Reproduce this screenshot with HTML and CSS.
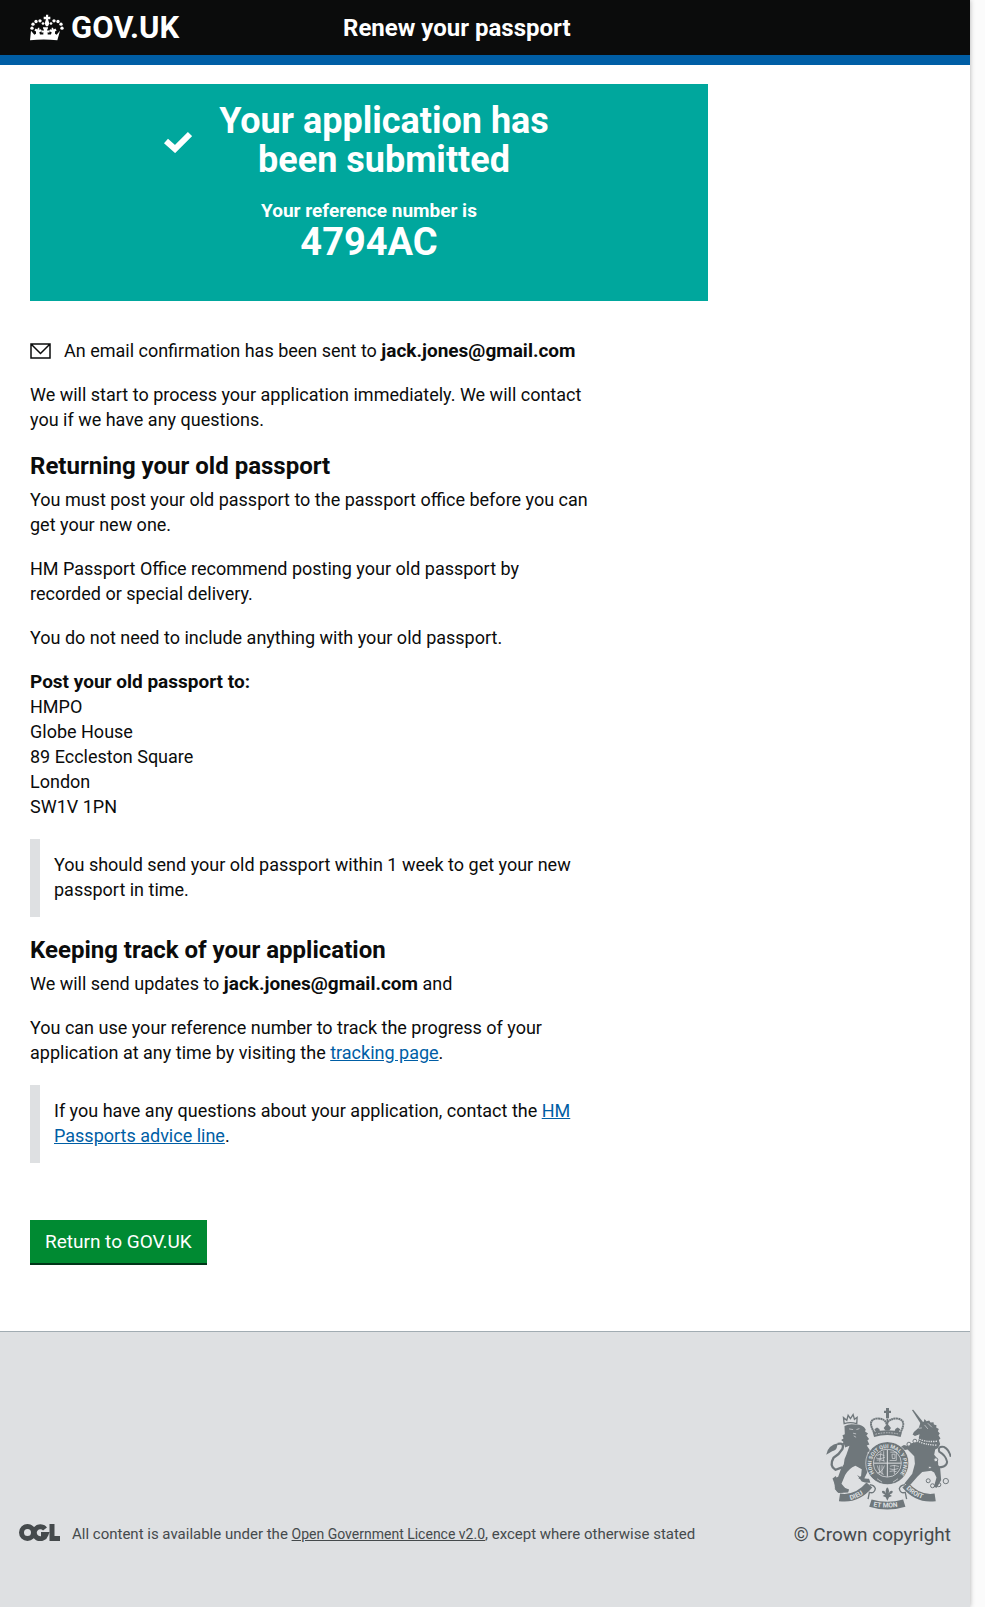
FILE: index.html
```
<!DOCTYPE html>
<html lang="en">
<head>
<meta charset="utf-8">
<title>Renew your passport</title>
<link rel="stylesheet" href="styles.css">
</head>
<body>
<div class="page">
  <header class="header">
    <a class="brand" href="#">
      <svg class="crown" viewBox="91 40 102 80" aria-hidden="true">
        <g fill="#fff">
          <circle cx="97" cy="82" r="5"/><circle cx="100" cy="70" r="5"/><circle cx="109" cy="62" r="5"/><circle cx="121" cy="60" r="5"/><circle cx="130" cy="68" r="4"/>
          <circle cx="187" cy="82" r="5"/><circle cx="184" cy="70" r="5"/><circle cx="175" cy="62" r="5"/><circle cx="163" cy="60" r="5"/><circle cx="154" cy="68" r="4"/>
          <path d="M139 42h7l-1 6h7v7h-7l4 13-4 8h-6l-4-8 4-13h-7v-7h7z"/>
          <path d="M94 90l10 12 5-3v-7l-5-3 4-6 5 3 2-5 4 0 0 6 5-2 2 6-7 3 2 7 10 0v-7l-5 2v-8l6 2v-6h-2v-5h15v5h-2v6l6-2v8l-5-2v7l10 0 2-7-7-3 2-6 5 2 0-6 4 0 2 5 5-3 4 6-5 3v7l5 3 10-12-8 28q-41-4-82 0z"/>
        </g>
      </svg>
      <span>GOV.UK</span>
    </a>
    <span class="service">Renew your passport</span>
  </header>

  <main class="main">
    <section class="panel">
      <div class="panel-title">
        <svg class="tick" viewBox="0 0 28 22" aria-hidden="true"><path d="M2 10l9 8L26 3" fill="none" stroke="#fff" stroke-width="6"/></svg>
        <h1>Your application has<br>been submitted</h1>
      </div>
      <p class="panel-label">Your reference number is</p>
      <p class="panel-ref">4794AC</p>
    </section>

    <p class="sent">
      <svg class="mail" viewBox="0 0 21 16" aria-hidden="true"><path d="M1 1h19v14H1zM1 1l9.500 9.500L20 1" fill="none" stroke="#0b0c0c" stroke-width="1.500"/></svg>
      <span>An email confirmation has been sent to <strong>jack.jones@gmail.com</strong></span>
    </p>
    <p>We will start to process your application immediately. We will contact<br>you if we have any questions.</p>

    <h2>Returning your old passport</h2>
    <p>You must post your old passport to the passport office before you can<br>get your new one.</p>
    <p>HM Passport Office recommend posting your old passport by<br>recorded or special delivery.</p>
    <p>You do not need to include anything with your old passport.</p>
    <p><strong>Post your old passport to:</strong><br>HMPO<br>Globe House<br>89 Eccleston Square<br>London<br>SW1V 1PN</p>
    <div class="inset">You should send your old passport within 1 week to get your new<br>passport in time.</div>

    <h2>Keeping track of your application</h2>
    <p>We will send updates to <strong>jack.jones@gmail.com</strong> and</p>
    <p>You can use your reference number to track the progress of your<br>application at any time by visiting the <a href="#">tracking page</a>.</p>
    <div class="inset">If you have any questions about your application, contact the <a href="#">HM<br>Passports advice line</a>.</div>

    <button class="button" type="button">Return to GOV.UK</button>
  </main>

  <footer class="footer">
    <div class="licence">
      <svg class="ogl" viewBox="0 0 41 17" role="img" aria-label="Open Government Licence">
        <g fill="none" stroke="#454a4c" stroke-width="5">
          <circle cx="8.500" cy="8.500" r="6"/>
          <path d="M26 5A6 6 0 1 0 27 10.500h-5M33 0v14.500h8"/>
        </g>
      </svg>
      <span>All content is available under the <a href="#">Open Government Licence v2.0</a>, except where otherwise stated</span>
    </div>
    <div class="copyright">
      <svg class="crest" viewBox="77 48 375 310" role="img" aria-label="Royal coat of arms">
        <defs>
          <path id="garter" d="M222 247A48 48 0 1 1 301 247"/>
          <path id="motto-left" d="M150 328Q180 321 207 294"/>
          <path id="motto-mid" d="M219 347Q261 355 307 346"/>
          <path id="motto-right" d="M317 294Q344 321 384 329"/>
        </defs>
        <g fill="#6f777b">
          <!-- lion -->
          <path d="M132 105q15-8 33-4 22-1 31 15l-2 6 9 6-5 6 8 10-5 5 6 12-8 3 12 18-10 3 6 16-8 12q8 18 3 29l-12 24q-10-1-16-3l8-8 2-20-19-10q-20 8-31 28l-11 26 12 14-3 9q-11 6-22 2l-7-14-2-27 12-5 9-25 8-13q0-15 8-29l9-26-13 5-3-9-7 2 5-10-7-6 7-4-3-10 7-3z"/>
          <path d="M77 192q4-30 38-36l-5 9q-1 14-15 16z"/>
          <path d="M170 253q20 13 36 11l4 12q-15 1-26-4zM96 263l10-7 7 18-10 8zM102 294q11-7 30-3l14 5-3 9-29 2z"/>
          <!-- unicorn -->
          <path d="M335 57l4-1 30 38-7 5z"/>
          <path d="M341 123l15-13 5-16 9-1 3-9 6 7 8-2 4 6 9-1 1 7 8 2-1 7 8 4-3 7 6 7-4 5 6 10-5 4 4 12-7 13-8 4-3 16q13 13 12 30l6 10 3 36-13 23-9-2 8-29-7-15-9-5-27 4-14 13-21 24q-13 1-19-2l24-30 8-30-2-23-20-20-16 3-7-10 12-7 15 4 7-9 20-4 5-23-14 5-7-4z"/>
          <!-- crown -->
          <path d="M257 51h9v8h6v7h-6v16h-9V66h-6v-7h6z"/>
          <path d="M217 124q44-12 88 0l-4 14q-40-11-80 0z"/>
          <path d="M227 124l-5-9 8-5 7 4 2 8zM255 119l-5-8 6-7 5-5 5 5 6 7-5 8zM283 122l2-8 7-4 8 5-5 9z"/>
          <!-- centre emblem -->
          <path d="M258 293q3-5 6 0 4 8 1 15 4-11 12-7 1 8-9 10l7 5-9 4-5 10-5-10-9-4 7-5q-10-2-9-10 8-4 12 7-3-7 1-15z"/>
        </g>
        <g fill="none" stroke="#6f777b">
          <path d="M131 98l-2-18 10 8 4-15 7 10 8-12 4 14 8-6-1 19q-20-6-38 0z" stroke-width="4"/>
          <path d="M112 159q20-5 14 15-10 17-27 27-14 24 6 36l20-7" stroke-width="7"/>
          <path d="M403 229q36 4 38-16-4-20-24-31-5-17 14-14 15 7 21 30" stroke-width="6"/>
          <path d="M221 124q-21-36 6-41 28-2 32 18 6-20 34-18 27 5 8 41" stroke-width="6" stroke-dasharray="6 1"/>
          <path d="M261 83v22" stroke-width="5"/>
          <!-- ribbon -->
          <path d="M117 320Q169 328 207 283M405 320Q353 328 315 283" stroke-width="23"/>
          <path d="M210 337Q261 353 312 337" stroke-width="23"/>
          <path d="M208 282q14 1 17 12-3 16-18 11l-4 20M314 282q-14 1-17 12 3 16 18 11l4 20" stroke-width="4"/>
          <g stroke-width="3"><circle cx="384" cy="270" r="6"/><circle cx="397" cy="285" r="6"/><circle cx="416" cy="282" r="6"/><circle cx="437" cy="271" r="8"/><circle cx="407" cy="207" r="6" fill="#dee0e2"/><circle cx="389" cy="230" r="4" fill="#dee0e2"/><circle cx="344" cy="151" r="6"/><circle cx="326" cy="160" r="6"/></g>
        </g>
        <circle cx="261" cy="217" r="53" fill="none" stroke="#6f777b" stroke-width="22"/>
        <circle cx="261" cy="217" r="42" fill="#6f777b"/>
        <g fill="none" stroke="#dee0e2" stroke-width="2">
          <circle cx="261" cy="217" r="65"/>
          <circle cx="261" cy="217" r="42"/>
          <path d="M261 176v82M220 217h82" stroke-width="3"/>
          <path d="M229 194q10-8 23 0M227 201q10 6 27-2M229 208q11-4 24 3M242 184l-4 29M250 181v30M270 184h18v25h-20M275 190h9v13h-8zM231 224q4 21 19 27M238 223v25M245 223v28M252 224q-4 18-21 23M269 226q11-5 27 1M268 234q12 6 26-1M268 242q10-4 21 1M282 223v27"/>
          <path d="M351 149q18 12 58 14M352 142q22 13 60 9" stroke-width="4" stroke-dasharray="4 3"/>
          <path d="M146 114l12 2M168 116l9-3M158 127l9 2M160 135l7 4M355 112l10-1M373 102l10 12M383 97l12 12M230 264l15 10M278 274l15-10"/>
          <path d="M225 130q36-9 72 0" stroke-dasharray="5 3"/>
        </g>
        <g class="motto">
          <text><textPath href="#garter">HONI SOIT QUI MAL Y PENSE</textPath></text>
          <text class="motto-large"><textPath href="#motto-left">DIEU</textPath></text>
          <text class="motto-large"><textPath href="#motto-mid">ET MON</textPath></text>
          <text class="motto-large"><textPath href="#motto-right">DROIT</textPath></text>
        </g>
      </svg>
      <span>© Crown copyright</span>
    </div>
  </footer>
</div>
</body>
</html>
```
FILE: styles.css
```
* { box-sizing: border-box; }
body { margin: 0; background: #fbfbfb; color: #0b0c0c; font: 18px/25px Roboto, "Liberation Sans", sans-serif; }
.page { display: flex; flex-direction: column; min-height: 100vh; margin-right: 15px; background: #fff; box-shadow: 0 0 5px rgba(0, 0, 0, .3); }
.header { display: grid; grid-template-columns: 313px 1fr; align-items: center; height: 65px; padding: 0 30px; background: #0b0c0c; border-bottom: 10px solid #005ea5; color: #fff; font-weight: 700; }
.brand { display: flex; align-items: center; gap: 7px; color: #fff; text-decoration: none; font-size: 31px; line-height: 30px; }
.crown { width: 34px; height: 27px; }
.service { font-size: 24px; line-height: 30px; }
.main { padding: 19px 30px 66px; }
.panel { max-width: 678px; height: 217px; margin-bottom: 37px; padding: 18px 0; background: #00a79d; color: #fff; text-align: center; font-weight: 700; }
.panel-title { display: flex; justify-content: center; align-items: center; gap: 27px; margin-right: 25px; }
.tick { width: 28px; height: 22px; margin-top: 2px; }
h1 { margin: 0; font-size: 36px; line-height: 39px; }
.panel-label { margin: 18px 0 0; font-size: 19px; line-height: 25px; }
.panel-ref { margin: 0; font-size: 38px; line-height: 38px; }
p { margin: 0 0 19px; }
strong { font-size: 19px; line-height: 1; }
h2 { margin: 0 0 6px; font-size: 24px; line-height: 30px; }
.sent { display: flex; align-items: center; gap: 13px; }
.mail { width: 21px; height: 16px; }
a { color: #005ea5; }
.inset { margin: 20px 0 18px; padding: 13px 14px 15px; border-left: 10px solid #dee0e2; }
.button { display: block; margin-top: 57px; padding: 9px 15px; border: 0; border-bottom: 2px solid #003618; background: #008a32; color: #fff; font: inherit; font-size: 19px; }
.footer { display: flex; flex: 1; justify-content: space-between; align-items: flex-end; padding: 60px 19px; border-top: 1px solid #a1acb2; background: #dee0e2; color: #454a4c; }
.licence { display: flex; align-items: center; gap: 12px; font-size: 15px; }
.licence a { color: inherit; font-size: 14px; }
.ogl { width: 41px; height: 17px; margin-bottom: 4px; }
.copyright { display: flex; flex-direction: column; align-items: flex-end; gap: 12px; font-size: 19px; }
.crest { width: 125px; height: 103px; }
.motto { fill: #dee0e2; font-size: 16px; font-weight: 700; }
.motto-large { font-size: 20px; }
```
